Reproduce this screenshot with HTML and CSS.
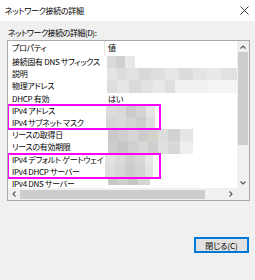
FILE: index.html
```html
<!DOCTYPE html>
<html lang="ja">
<head>
  <meta charset="UTF-8">
  <title>ネットワーク接続の詳細</title>
  <link rel="stylesheet" href="styles.css">
</head>
<body>
  <div class="dialog">
    <div class="titlebar">
      <span class="title">ネットワーク接続の詳細</span>
      <svg class="close" width="9" height="9" viewBox="0 0 9 9"><path d="M0.5 0.5L8.5 8.5M8.5 0.5L0.5 8.5" stroke="#222" stroke-width="0.9" fill="none"/></svg>
    </div>

    <div class="body">
      <div class="label">ネットワーク接続の詳細(D):</div>
      <div class="listbox">
        <div class="view">
          <div class="header">
            <div class="name">プロパティ</div>
            <div class="value sep">値</div>
          </div>
          <div class="rows">
            <div class="row"><span class="name">接続固有 DNS サフィックス</span><span class="value"><i class="blur b-dns"></i></span></div>
            <div class="row"><span class="name">説明</span><span class="value"><i class="blur b-desc"></i></span></div>
            <div class="row"><span class="name">物理アドレス</span><span class="value"><i class="blur b-mac"></i></span></div>
            <div class="row"><span class="name">DHCP 有効</span><span class="value text">はい</span></div>
            <div class="mark">
              <div class="row"><span class="name">IPv4 アドレス</span><span class="value"><i class="blur b-ip"></i></span></div>
              <div class="row"><span class="name">IPv4 サブネット マスク</span><span class="value"><i class="blur b-mask"></i></span></div>
            </div>
            <div class="row"><span class="name">リースの取得日</span><span class="value"><i class="blur b-lease1"></i></span></div>
            <div class="row"><span class="name">リースの有効期限</span><span class="value"><i class="blur b-lease2"></i></span></div>
            <div class="mark">
              <div class="row"><span class="name">IPv4 デフォルト ゲートウェイ</span><span class="value"><i class="blur b-gw"></i></span></div>
              <div class="row"><span class="name">IPv4 DHCP サーバー</span><span class="value"><i class="blur b-dhcp"></i></span></div>
            </div>
            <div class="row"><span class="name">IPv4 DNS サーバー</span><span class="value"><i class="blur b-dnss"></i></span></div>
          </div>
        </div>

        <div class="vscroll">
          <div class="arrow"><svg width="6" height="4" viewBox="0 0 6 4"><path d="M0.5 3.5L3 1L5.5 3.5" stroke="#555" stroke-width="1.1" fill="none"/></svg></div>
          <div class="vthumb"></div>
          <div class="fill"></div>
          <div class="arrow"><svg width="6" height="4" viewBox="0 0 6 4"><path d="M0.5 0.5L3 3L5.5 0.5" stroke="#555" stroke-width="1.1" fill="none"/></svg></div>
        </div>

        <div class="hscroll">
          <div class="arrow"><svg width="4" height="6" viewBox="0 0 4 6"><path d="M3.5 0.5L1 3L3.5 5.5" stroke="#555" stroke-width="1.1" fill="none"/></svg></div>
          <div class="hthumb"></div>
          <div class="fill"></div>
          <div class="arrow"><svg width="4" height="6" viewBox="0 0 4 6"><path d="M0.5 0.5L3 3L0.5 5.5" stroke="#555" stroke-width="1.1" fill="none"/></svg></div>
        </div>

        <div class="corner"></div>
      </div>
    </div>

    <div class="footer">
      <button class="btn">閉じる(C)</button>
    </div>
  </div>
</body>
</html>
```

FILE: styles.css
```css
body {
  margin: 0;
  background: #f0f0f0;
  font-family: "Noto Sans CJK JP", "Noto Sans", sans-serif;
  font-size: 8px;
  font-feature-settings: "palt";
  color: #000;
}
.dialog {
  width: 255px;
  height: 280px;
  display: flex;
  flex-direction: column;
}
.titlebar {
  height: 21px;
  background: #fff;
  display: flex;
  align-items: center;
  justify-content: space-between;
  padding: 0 6px 0 5px;
}
.title {
  font-size: 8px;
  letter-spacing: -0.3px;
}
.body {
  padding: 6px 0 0 7px;
}
.label {
  height: 12px;
  line-height: 12px;
  margin-bottom: 1px;
  padding-left: 1px;
  letter-spacing: -0.45px;
}
.listbox {
  width: 241px;
  height: 159px;
  border: 1px solid #a9a9a9;
  background: #fff;
  display: grid;
  grid-template-columns: 229px 12px;
  grid-template-rows: 147px 12px;
}
.view {
  overflow: hidden;
}
.header {
  height: 15px;
  display: flex;
  line-height: 14px;
}
.name {
  width: 96px;
  flex: none;
  padding-left: 4px;
  box-sizing: border-box;
  white-space: nowrap;
  letter-spacing: -0.3px;
}
.value {
  flex: 1;
  display: flex;
}
.header .sep {
  border-left: 1px solid #e5e5e5;
  padding-left: 3px;
}
.row {
  height: 12.2px;
  line-height: 12.2px;
  display: flex;
}
.value.text {
  padding-left: 4px;
}
.mark {
  width: 152px;
  outline: 2px solid #ff00ff;
  outline-offset: -1px;
}
.blur {
  display: block;
  height: 100%;
}
.b-dns {
  margin-left: 3px;
  width: 28px;
  background: linear-gradient(90deg, #dadada 0 9px, #d0d0d0 9px 18px, #e8e8e8 18px);
}
.b-desc {
  margin-left: 3px;
  width: 130px;
  background: linear-gradient(90deg, #e4e4e4 0 10px, #dcdcdc 10px 20px, #e2e2e2 20px 32px, #d8d8d8 32px 44px, #dedede 44px 58px, #e6e6e6 58px 72px, #dcdcdc 72px 86px, #e4e4e4 86px 100px, #e9e9e9 100px 114px, #e1e1e1 114px);
}
.b-mac {
  margin-left: 3px;
  width: 130px;
  background: linear-gradient(90deg, #dedede 0 10px, #e6e6e6 10px 22px, #dadada 22px 34px, #e2e2e2 34px 46px, #e8e8e8 46px 58px, #dfdfdf 58px 68px, #f1f1f1 68px 100px, #f4f4f4 100px);
}
.b-ip {
  margin-left: 2px;
  width: 49px;
  background: linear-gradient(90deg, #dcdcdc 0 10px, #d9d9d9 10px 20px, #cbcbcb 20px 30px, #d4d4d4 30px 40px, #e6e6e6 40px);
}
.b-mask {
  margin-left: 2px;
  width: 49px;
  background: linear-gradient(90deg, #d6d6d6 0 10px, #dadada 10px 20px, #d2d2d2 20px 30px, #cdcdcd 30px 40px, #dcdcdc 40px);
}
.b-lease1 {
  margin-left: 4px;
  width: 85px;
  background: linear-gradient(90deg, #c9c9c9 0 10px, #cfcfcf 10px 20px, #d6d6d6 20px 30px, #cccccc 30px 40px, #d5d2cc 40px 50px, #dddddd 50px 60px, #d2d2d2 60px 72px, #e6e6e6 72px);
}
.b-lease2 {
  margin-left: 4px;
  width: 85px;
  background: linear-gradient(90deg, #cdcdcd 0 10px, #c6c6c6 10px 20px, #d0d0d0 20px 30px, #d8d8d8 30px 40px, #cfcfcf 40px 50px, #e0e0e0 50px 60px, #d8d8d8 60px 72px, #eeeeee 72px);
}
.b-gw {
  margin-left: 1px;
  width: 48px;
  background: linear-gradient(90deg, #e2e2e2 0 10px, #dadada 10px 20px, #cfcfcf 20px 30px, #d6d6d6 30px 40px, #e6e6e6 40px);
}
.b-dhcp {
  margin-left: 1px;
  width: 48px;
  background: linear-gradient(90deg, #dedede 0 10px, #d6d6d6 10px 20px, #cbcbcb 20px 30px, #d2d2d2 30px 40px, #e2e2e2 40px);
}
.b-dnss {
  margin-left: 4px;
  width: 42px;
  height: 6px;
  margin-top: 1px;
  background: linear-gradient(90deg, #c8c8c8 0 10px, #cfcfcf 10px 20px, #c4c4c4 20px 30px, #d4d4d4 30px);
}
.vscroll {
  background: #f0f0f0;
  display: flex;
  flex-direction: column;
}
.vscroll .arrow {
  height: 11px;
  display: flex;
  align-items: center;
  justify-content: center;
}
.vthumb {
  height: 93px;
  margin: 0 1px;
  background: #cdcdcd;
}
.hscroll {
  background: #f0f0f0;
  display: flex;
}
.hscroll .arrow {
  width: 12px;
  display: flex;
  align-items: center;
  justify-content: center;
}
.hthumb {
  width: 185px;
  margin: 2px 0 1px;
  background: #cdcdcd;
}
.fill {
  flex: 1;
}
.corner {
  background: #f0f0f0;
}
.footer {
  display: flex;
  justify-content: flex-end;
  padding: 36px 6px 0 0;
}
.btn {
  width: 55px;
  height: 16px;
  padding: 0;
  background: #e1e1e1;
  border: 1px solid #0078d7;
  box-shadow: inset 0 0 0 1px #0078d7;
  font-family: inherit;
  font-size: 8px;
  font-feature-settings: "palt";
  color: #000;
}
```
